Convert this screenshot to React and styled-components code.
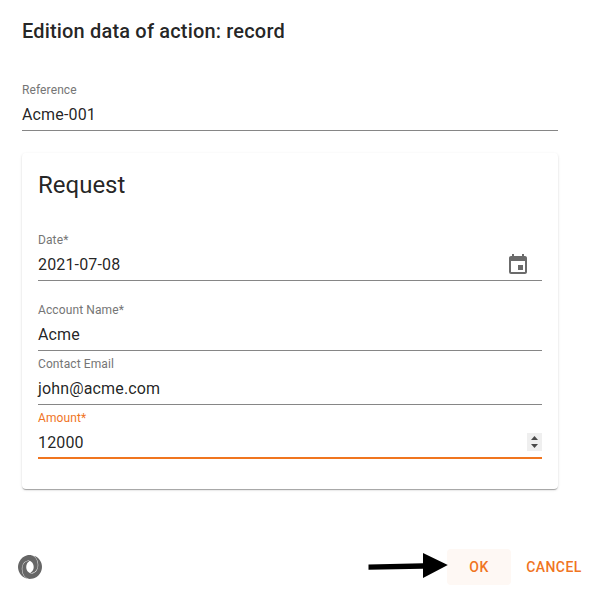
import React from "react";
import styled, { createGlobalStyle } from "styled-components";
import { SiJson } from "react-icons/si";
import { MdEvent } from "react-icons/md";

const GlobalStyle = createGlobalStyle`
  * { box-sizing: border-box; }
  body {
    margin: 0;
    background: #fff;
    color: rgba(0, 0, 0, 0.87);
    font-family: Roboto, "Liberation Sans", sans-serif;
  }
`;

const Dialog = styled.main`
  width: 597px;
  height: 598px;
  display: flex;
  flex-direction: column;
  background: #fff;
  overflow: hidden;
`;

const Title = styled.h2`
  margin: 15px 22px 36px;
  font-size: 20px;
  font-weight: 500;
  line-height: 32px;
  letter-spacing: 0.17px;
`;

const Content = styled.section`
  width: 536px;
  margin-left: 22px;
  flex: 1;
`;

const Card = styled.div`
  margin-top: 22px;
  height: 336px;
  padding: 16px;
  border-radius: 4px;
  box-shadow: 0 2px 1px -1px rgba(0, 0, 0, 0.2), 0 1px 1px 0 rgba(0, 0, 0, 0.14),
    0 1px 3px 0 rgba(0, 0, 0, 0.12);
`;

const CardTitle = styled.h3`
  margin: 0 0 32px;
  font-size: 24px;
  font-weight: 400;
  line-height: 32px;
`;

const FieldBox = styled.div`
  height: 48px;
  margin-top: ${(p) => p.$gap || 0}px;
  display: flex;
  flex-direction: column;
  box-shadow: inset 0 ${(p) => (p.$active ? "-2px #f0751f" : "-1px #868686")};
`;

const Label = styled.label`
  height: 16px;
  padding-top: 1px;
  font-size: 12px;
  line-height: 13px;
  letter-spacing: 0.11px;
  color: ${(p) => (p.$active ? "#f0751f" : "#757575")};
`;

const InputRow = styled.div`
  height: 30px;
  display: flex;
  align-items: center;
  justify-content: space-between;
`;

const Value = styled.span`
  padding-top: 2px;
  font-size: 16px;
  line-height: 20px;
  letter-spacing: 0.15px;
`;

const CalendarIcon = styled(MdEvent)`
  width: 24px;
  height: 24px;
  margin: 2px 12px 0 0;
  color: #6b6b6b;
`;

const Spinner = styled.svg`
  width: 15px;
  height: 18px;
  background: #efefef;
`;

const Footer = styled.footer`
  height: 62px;
  padding: 13px 8px 13px 18px;
  display: flex;
  align-items: center;
`;

const JsonIcon = styled(SiJson)`
  width: 24px;
  height: 24px;
  color: #666;
`;

const Arrow = styled.svg`
  width: 82px;
  height: 30px;
  margin-left: auto;
  overflow: visible;
  z-index: 1;
`;

const Button = styled.button`
  width: ${(p) => p.$width}px;
  height: 36px;
  margin-left: ${(p) => p.$gap || 0}px;
  padding: 0;
  border: 0;
  border-radius: 4px;
  background: ${(p) => (p.$focused ? "#fef8f4" : "transparent")};
  color: #f0751f;
  font: 500 14px/24px Roboto, sans-serif;
  letter-spacing: 0.4px;
`;

function Field({ label, value, gap, active, children }) {
  return (
    <FieldBox $gap={gap} $active={active}>
      <Label $active={active}>{label}</Label>
      <InputRow>
        <Value>{value}</Value>
        {children}
      </InputRow>
    </FieldBox>
  );
}

export default function App() {
  return (
    <Dialog>
      <GlobalStyle />
      <Title>Edition data of action: record</Title>
      <Content>
        <Field label="Reference" value="Acme-001" />
        <Card>
          <CardTitle>Request</CardTitle>
          <Field label="Date*" value="2021-07-08">
            <CalendarIcon />
          </Field>
          <Field label="Account Name*" value="Acme" gap={22} />
          <Field label="Contact Email" value="john@acme.com" gap={6} />
          <Field label="Amount*" value="12000" gap={6} active>
            <Spinner viewBox="0 0 15 18">
              <path d="M4 7 7.5 3 11 7ZM4 11 7.5 15 11 11Z" fill="#494949" />
            </Spinner>
          </Field>
        </Card>
      </Content>
      <Footer>
        <JsonIcon />
        <Arrow viewBox="0 0 82 30">
          <path d="M3.5 12.5 58 11.3V1L82.8 13 58 26V16.7L3.5 17.8Z" fill="#000" />
        </Arrow>
        <Button $width={64} $focused>OK</Button>
        <Button $width={70} $gap={8}>CANCEL</Button>
      </Footer>
    </Dialog>
  );
}
